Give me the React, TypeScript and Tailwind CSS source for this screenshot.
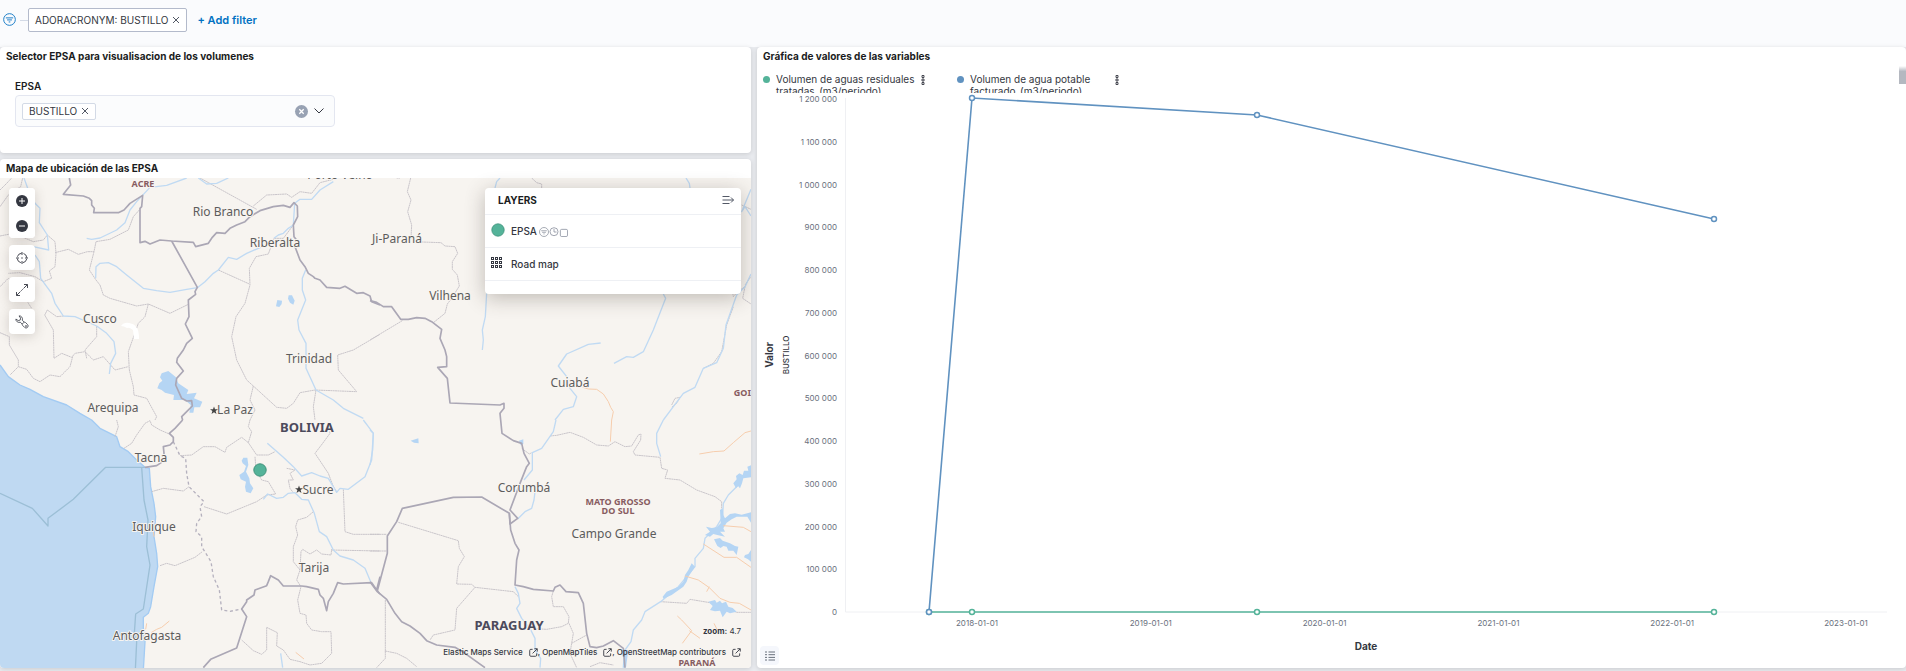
const HALO = "[paint-order:stroke] stroke-[#f8f4f0] [stroke-width:2px]";

// every quadrant of the base map is drawn in its own 3x coordinate space
const quadrants = [
  {
    x: 0,
    y: 170,
    lakes: [
      "485,610 505,603 528,622 535,640 565,660 560,672 590,668 582,685 607,695 600,712 583,712 580,728 568,728 572,705 555,690 535,690 520,690 522,675 495,668 485,660 472,655 478,640 487,632 480,622",
      "832,390 846,392 845,402 838,411 828,409",
      "866,376 876,376 884,392 880,404 870,398 864,386",
    ],
    rivers: [
      "72,24 85,60 105,100 120,115 118,158 142,195 146,240 100,230",
      "105,255 118,275 122,325 155,370 165,400 190,438 225,440 290,468 320,490 342,515 347,550 332,580 328,612",
      "260,205 275,208 300,204 350,180 375,158 390,120 410,95 450,52 500,46 560,24",
      "595,24 620,42 650,40 685,24",
      "287,325 288,290 300,280 325,278 350,290 380,315 430,355 470,362 510,367 560,358 592,353 615,335 640,310 655,300 685,262 710,268 740,250 775,235 800,225",
      "822,205 835,195 850,190 865,175 880,165 884,100 900,88 935,88 960,60 1000,35",
      "917,300 907,325 907,360 917,390 893,450 897,480 918,520 918,595 948,660 1000,690 1030,715 1090,745",
    ],
    regions: [
      "0,60 20,40 35,24",
      "0,110 25,75 62,50 68,24",
      "0,198 40,190 100,215 130,210 142,195 165,215 168,250 165,290 148,303 155,325 130,335 105,320 60,308 25,310",
      "165,248 205,238 235,253 262,245 282,245 288,215 330,208 385,180 400,140 418,120",
      "282,245 268,300 288,330 300,345 310,375 330,385 410,408 445,402 510,430 565,403",
      "600,24 770,118",
      "760,108 800,75 860,72 875,82 900,65 935,70 960,38 1000,28",
      "880,165 850,205 822,205 805,252 768,260 748,295 750,345 735,400 708,440 695,500 710,570 740,630 760,648 830,712 860,715 880,700 900,668 945,660 1070,665 1015,600 1013,555 1060,540 1140,493",
      "655,300 748,342",
      "445,402 435,440 415,460 385,545 388,600 400,650 402,675 440,685 470,740 465,750",
      "0,350 25,325 60,350 85,400 95,415",
      "142,420 134,435 160,480 162,565 185,550 215,562 225,550 255,545 280,570 310,560 345,600 385,590",
      "142,420 170,440 190,438",
      "290,468 290,500 255,540 260,565",
      "0,488 28,500 28,525 55,570 55,590 30,615",
      "55,590 80,598 100,625 120,635 150,615 180,620 210,590 218,560",
      "760,648 750,690 765,720 750,750",
      "948,660 940,710 945,750",
    ],
    countries: [
      "208,24 212,45 190,73 250,78 268,85 275,92 275,105 283,115 281,128 355,128 372,120 390,100 428,76 425,110 420,115 420,218 435,214 450,222 480,210 515,213 580,217 587,230 625,220 637,202 650,188 675,190 690,175 710,165 735,155 750,140 780,122 820,110 850,106 870,112 882,98 892,108 893,140 880,165 882,200 890,210 885,230 900,270 915,290 925,310 940,320 945,325 960,330 980,352 1020,355 1035,349 1070,370 1090,368 1110,378 1115,395 1140,405",
      "515,213 592,352 585,365 587,373 565,390 567,440 556,462 577,505 560,520 550,540 532,565 530,577 550,603 530,625 527,645 545,685 560,693 575,692 577,708 560,725 545,740 548,750",
    ],
    roads: [],
  },
  {
    x: 370,
    y: 170,
    lakes: [],
    rivers: [
      "375,54 380,35 390,24",
      "948,24 958,40 960,54",
      "350,370 346,440 337,480 340,510 337,540",
      "692,519 655,523 590,552 565,588 590,620 600,655 620,680 610,710 580,718 555,750",
      "880,372 887,385 850,480 820,545 790,562 770,560 732,580",
      "1143,58 1115,125 1125,110 1143,138",
      "1143,312 1125,350 1100,375 1068,465 1060,535 1040,578 1000,595 975,652 940,670 910,710 880,750",
    ],
    regions: [
      "122,24 112,65 123,90 113,125 125,165 123,205",
      "80,24 90,24",
      "485,24 500,38 515,42 515,54",
      "155,216 213,218 225,228 255,230 263,250 247,275 247,298 262,315 268,348 245,385 232,402 225,430 190,458",
      "97,452 0,510",
      "1085,350 1090,380 1103,365 1125,350 1118,385 1143,402",
      "1115,105 1143,118",
      "1000,595 1030,580 1055,545 1070,465 1090,410",
      "905,705 915,685 930,682 920,700 905,712",
      "1125,345 1143,320",
    ],
    countries: [
      "0,392 20,397 40,410 65,410 92,448 115,448 140,443 165,445 185,455 215,478 210,505 225,540 230,560 230,590 203,592 232,625 240,699 390,705 402,700 402,715 390,730 392,750",
    ],
    roads: ["638,652 655,657 680,658 700,672 715,695 722,712 730,725 725,750"],
  },
  {
    x: 0,
    y: 420,
    lakes: [
      "725,122 730,113 742,113 745,135 738,155 748,175 750,190 760,205 752,220 738,215 735,200 738,185 722,178 718,165 732,155 738,138 728,130",
    ],
    rivers: [
      "802,70 850,112 880,140 905,168 935,158 960,168 985,175 1010,217 1020,205 1045,208 1095,170 1115,120 1120,40 1105,20 1090,0",
      "790,238 803,222 830,235 850,232 865,220 885,218 905,238 925,240 943,280 958,335 980,350 1000,390 1020,408 1060,420 1095,445 1112,485",
      "842,700 848,743",
    ],
    regions: [
      "345,50 355,20 350,0",
      "372,85 395,70 410,45 435,10 450,2 455,15 480,30 508,42",
      "540,107 575,105 610,80 645,80 675,97 680,82 725,52 745,68 770,105 805,105 825,95",
      "745,68 755,35 745,20 750,0",
      "455,215 490,205 550,213 567,200",
      "612,260 680,282 770,245 800,225 827,222 805,185 785,180 768,150 765,110",
      "480,437 500,430 525,437 585,412 607,395",
      "985,15 990,40 968,70 945,100 985,160 1000,200 1010,215",
      "860,145 885,150 870,160 880,180 865,180 870,205 880,218",
      "1030,208 1035,335 1060,343 1070,343 1140,343",
      "993,390 1140,393",
      "940,275 920,292 893,300 887,320 893,345 880,380 880,425 900,450 890,480 903,500 893,540 900,580 918,585 920,610 935,630 965,635 993,635 995,700 965,730 930,735 900,725 870,718 850,690 830,678 832,638 800,622 800,690 785,703 760,692 725,660",
      "900,450 903,395 908,388 930,402 950,390 965,402 993,405 995,388",
    ],
    countries: [
      "548,0 525,25 508,40 520,52 520,65 510,75 490,80 492,100 488,125 470,137 435,142",
      "610,743 632,718 710,684 740,590 725,567 740,545 740,540 762,525 765,510 800,497 805,485 812,467 835,480 850,498 905,498 920,500 955,508 960,525 970,535 980,572 985,545 1000,520 1013,488 1030,492 1115,488 1130,510 1140,470",
      "1130,510 1140,522",
    ],
    roads: ["460,335 462,350", "437,628 440,610", "453,638 470,628 485,622 508,603", "887,697 912,717"],
  },
  {
    x: 370,
    y: 420,
    lakes: [
      "122,62 145,55 146,70 132,68",
      "447,62 460,58 460,72 452,76",
      "1090,190 1100,178 1098,168 1108,160 1118,165 1122,152 1135,152 1132,140 1143,136 1143,172 1120,175 1116,190 1110,205 1104,198 1098,205",
      "1050,270 1058,265 1060,285 1065,295 1080,282 1095,280 1115,284 1143,277 1143,308 1132,290 1100,290 1085,298 1070,308 1060,325 1065,335 1050,335 1065,350 1045,346 1030,342 1020,350 1005,345 1020,335 1008,320 1025,324 1040,322 1052,310",
      "1032,358 1050,354 1058,362 1080,370 1095,378 1105,380 1100,405 1090,392 1075,392 1070,380 1060,378 1052,384 1042,378",
      "1125,405 1135,402 1143,390 1143,425 1134,418 1122,412",
      "878,530 890,515 925,500 940,485 945,465 955,450 965,430 975,440 965,455 955,470 950,485 940,500 905,525 880,536",
      "1015,545 1035,540 1040,548 1050,542 1056,550 1068,545 1075,560 1088,564 1100,575 1080,580 1070,575 1058,592 1050,572 1035,574 1020,570 1028,558",
      "752,690 775,690 768,743 758,743 760,715",
    ],
    rivers: [
      "558,0 550,35 515,85 487,98 487,150 462,180",
      "495,215 492,240 485,265 465,275 443,297",
      "880,0 860,40 860,70 872,110",
      "1105,195 1075,225 1060,250 1058,290 1040,320 1005,355 1000,385 975,415 975,440 925,500 872,545 825,575 815,600 790,630 783,665 765,690 765,743",
      "0,30 10,40 8,90 0,135",
      "435,500 445,520 450,550 440,565 455,595 480,625 495,655 495,690 512,715 510,743",
    ],
    regions: [
      "455,85 478,102 485,98",
      "540,48 560,46 600,37 640,52 680,75 715,78 735,65 765,80 785,78 805,45 813,42 812,60 790,95 795,105 870,112 875,145 893,150 885,175 930,180 980,210 1035,230 1055,245 1055,265",
      "85,307 265,362 268,385 283,410 265,440 260,492 305,493 315,502 430,515 445,530",
      "315,502 260,565 255,630 190,645 180,660",
      "0,343 50,343",
      "0,393 50,393",
      "46,540 46,695",
      "46,693 80,700 110,715 140,740",
      "46,693 46,715 20,743",
      "550,513 545,530 550,560 580,560 597,590 595,610 575,620 530,628 480,625",
      "597,610 610,640 605,670 650,645",
      "605,670 600,700 620,743",
      "660,740 690,728 730,735",
      "872,545 950,550 960,538 1020,548 1100,577 1143,577",
    ],
    countries: [
      "392,0 396,40 430,62 455,70 462,100 478,130 470,140 450,190 420,270 443,295 420,312 418,280 335,231 250,232 97,265 80,305 52,348 52,400 22,512",
      "418,280 422,330 435,370 447,390 440,420 435,495 460,500 490,508 550,513 555,502 570,495 588,515 625,518 640,550 650,640 660,680 680,683 700,678 730,662 760,685 765,743",
      "0,485 22,515 50,538 75,580 95,605 120,618 150,640 170,662 200,675 255,682 285,700 345,743",
    ],
    roads: [
      "725,0 721,65",
      "1143,33 1125,38 1090,68 1062,93 1030,95 988,102",
      "1060,317 1120,322 1143,335",
      "1000,372 1062,412 1100,412 1143,442",
      "945,468 985,480 1018,503 1050,535 1080,547 1108,550 1143,570",
      "922,588 935,600 965,632 937,670",
      "958,632 990,655",
      "1032,610 1042,630",
      "1018,500 1010,515",
    ],
  },
];

const cities = [
  { name: "Rio Branco", x: 223, y: 216 },
  { name: "Riberalta", x: 275, y: 247 },
  { name: "Ji-Paraná", x: 397, y: 243 },
  { name: "Vilhena", x: 450, y: 300 },
  { name: "Porto Velho", x: 340, y: 179 },
  { name: "Cusco", x: 100, y: 323 },
  { name: "Trinidad", x: 309, y: 363 },
  { name: "Cuiabá", x: 570, y: 387 },
  { name: "Arequipa", x: 113, y: 412 },
  { name: "La Paz", x: 235, y: 414 },
  { name: "Tacna", x: 151, y: 462 },
  { name: "Sucre", x: 318, y: 494 },
  { name: "Corumbá", x: 524, y: 492 },
  { name: "Iquique", x: 154, y: 531 },
  { name: "Campo Grande", x: 614, y: 538 },
  { name: "Tarija", x: 314, y: 572 },
  { name: "Antofagasta", x: 147, y: 640 },
];

const states = [
  { name: "ACRE", x: 143, y: 187 },
  { name: "GOIÁS", x: 748, y: 396 },
  { name: "MATO GROSSO", x: 618, y: 505 },
  { name: "DO SUL", x: 618, y: 514 },
  { name: "PARANÁ", x: 697, y: 666 },
];

function Filter({ className }: { className?: string }) {
  return (
    <svg viewBox="0 0 16 16" className={className} fill="none" stroke="currentColor" strokeWidth="1.2">
      <circle cx="8" cy="8" r="7.2" />
      <path d="M3.5 6h9M5 8.500h6M7 11h2" />
    </svg>
  );
}

function Cross() {
  return (
    <svg viewBox="0 0 8 8" className="size-2" fill="none" stroke="#535966" strokeWidth="1">
      <path d="M1 1l6 6M7 1L1 7" />
    </svg>
  );
}

function External() {
  return (
    <svg viewBox="0 0 10 10" className="inline size-[9px] ml-[6px]" fill="none" stroke="currentColor" strokeWidth="1">
      <path d="M4 1.500H2A1.200 1.200 0 0 0 .8 2.700V8A1.200 1.200 0 0 0 2 9.200h5.300A1.200 1.200 0 0 0 8.500 8V6M6 .8h3.200V4M9 1L4 6" />
    </svg>
  );
}

function BaseMap() {
  return (
    <svg viewBox="0 178 751 490" className="block w-full h-auto bg-[#f7f4f0]" fill="none" strokeLinejoin="round">
      <g transform="translate(0 420) scale(0.33333)">
        <polygon
          points="0,-165 25,-130 60,-105 90,-92 130,-70 200,-45 240,-20 275,0 300,25 350,50 360,80 385,95 410,120 435,142 448,145 452,200 462,250 467,290 462,350 470,400 473,440 462,500 452,560 445,580 430,592 430,625 437,645 435,665 430,750 0,750"
          fill="#bfd9f2"
        />
        <polyline
          points="0,-165 25,-130 60,-105 90,-92 130,-70 200,-45 240,-20 275,0 300,25 350,50 360,80 385,95 410,120 435,142 448,145 452,200 462,250 467,290 462,350 470,400 473,440 462,500 452,560 445,580 430,592 430,625 437,645 435,665 430,750"
          stroke="#a3cbf3"
          strokeWidth="4"
        />
        <g stroke="#9cbfd6" strokeWidth="4">
          <polyline points="0,220 97,265 144,318 144,295 220,238 317,142 435,142" />
          <polyline points="425,142 432,240 444,300 440,380 450,435 430,567 407,582 403,640 410,665 406,750" />
        </g>
        <polyline
          points="520,65 540,107 557,115 560,160 567,200 612,245 600,260 605,290 590,310 588,335 605,350 605,380 633,425 640,470 658,510 665,570 690,574 725,567"
          stroke="#b5b1be"
          strokeWidth="4"
          strokeDasharray="9 8"
        />
      </g>
      {quadrants.map((q) => (
        <g key={`${q.x}-${q.y}`} transform={`translate(${q.x} ${q.y}) scale(0.33333)`}>
          {q.regions.map((p) => (
            <polyline key={p} points={p} stroke="#c9c5ca" strokeWidth="3" strokeDasharray="6 1" />
          ))}
          {q.rivers.map((p) => (
            <polyline key={p} points={p} stroke="#c0daf3" strokeWidth="4" />
          ))}
          {q.lakes.map((p) => (
            <polygon key={p} points={p} fill="#b5d5f4" />
          ))}
          {q.roads.map((p) => (
            <polyline key={p} points={p} stroke="#f6cdad" strokeWidth="3" />
          ))}
          {q.countries.map((p) => (
            <polyline key={p} points={p} stroke="#aba7b5" strokeWidth="5" />
          ))}
        </g>
      ))}
      <path d="M121 326q3-4 8-3 6 1 7 4 3 2 3 12h-5l-1-9q-4-3-6-2-3-2-6-2z" fill="#fff" />

      <g textAnchor="middle" className="font-['Noto_Sans',sans-serif]">
        {cities.map((c) => (
          <text key={c.name} x={c.x} y={c.y} className={`text-[12px] fill-[#5c5c5c] ${HALO}`}>
            {c.name}
          </text>
        ))}
        {states.map((s) => (
          <text key={s.name} x={s.x} y={s.y} className={`text-[9px] font-bold fill-[#875c61] ${HALO}`}>
            {s.name}
          </text>
        ))}
        <text x="307" y="432" className={`text-[13px] font-bold fill-[#4c4a5c] ${HALO}`}>BOLIVIA</text>
        <text x="509" y="630" className={`text-[13px] font-bold fill-[#4c4a5c] ${HALO}`}>PARAGUAY</text>
      </g>
      <g fill="#444">
        <path d="M214 406.500l1 2.800h3l-2.400 1.800.9 2.900-2.500-1.700-2.500 1.700.9-2.900-2.400-1.800h3z" />
        <path d="M299 485.500l1 2.800h3l-2.400 1.800.9 2.900-2.500-1.700-2.500 1.700.9-2.900-2.400-1.800h3z" />
      </g>
      <circle cx="260" cy="470" r="6.200" fill="#54b399" stroke="#41937c" />
    </svg>
  );
}

function MapControls() {
  const button = "flex items-center justify-center w-[26px] h-[25px] rounded bg-white text-[#343741]";
  return (
    <div className="absolute left-[9px] top-[10px] flex flex-col gap-[7px] [&>*]:shadow-[0_2px_12px_rgba(80,70,60,0.22)]">
      <div className="flex flex-col rounded bg-white">
        <button aria-label="Zoom in" className={button}>
          <svg viewBox="0 0 12 12" className="size-3">
            <circle cx="6" cy="6" r="6" fill="#343741" />
            <path d="M3 6h6M6 3v6" stroke="#fff" />
          </svg>
        </button>
        <button aria-label="Zoom out" className={button}>
          <svg viewBox="0 0 12 12" className="size-3">
            <circle cx="6" cy="6" r="6" fill="#343741" />
            <path d="M3 6h6" stroke="#fff" />
          </svg>
        </button>
      </div>
      <button aria-label="Fit to data bounds" className={button}>
        <svg viewBox="0 0 12 12" className="size-3" fill="none" stroke="currentColor" strokeWidth="0.900">
          <circle cx="6" cy="6" r="4.800" strokeDasharray="5.500 2.040" strokeDashoffset="-1" />
          <path d="M6 0v3M6 9v3M0 6h3M9 6h3" />
          <circle cx="6" cy="6" r="0.700" fill="currentColor" stroke="none" />
        </svg>
      </button>
      <button aria-label="Expand" className={button}>
        <svg viewBox="0 0 12 12" className="size-3" fill="none" stroke="currentColor" strokeWidth="0.900">
          <path d="M8 .5h3.500V4M4 11.500H.5V8M11.300.7L7.500 4.500M.7 11.300l3.800-3.800M5.300 6.700l1.400-1.400" />
        </svg>
      </button>
      <button aria-label="Tools" className={button}>
        <svg viewBox="0 0 14 14" className="size-[14px]" fill="none" stroke="currentColor" strokeWidth="0.800">
          <path d="M4 .9a3.200 3.200 0 0 1 3.300 4.300l1.900 1.900a2 2 0 0 1 1.300.4l2 2a2 2 0 0 1-2.900 2.900l-2-2a2 2 0 0 1-.4-1.300L5.300 7.200A3.200 3.200 0 0 1 .9 4l2.300 1.600 2-.5.4-2z" />
          <path d="M7.200 9.100l2-2" />
          <circle cx="11" cy="11" r="0.500" />
        </svg>
      </button>
    </div>
  );
}

function LayersPanel() {
  return (
    <div className="absolute right-[10px] top-[10px] w-64 pb-[13px] rounded bg-white text-[10px] text-[#343741] shadow-[0_4px_20px_rgba(60,50,40,0.3)]">
      <div className="flex items-center justify-between h-[27px] pl-[13px] pr-[7px] pb-[2px] border-b border-[#eef0f4]">
        <h3 className="font-bold text-[#1a1c21]">LAYERS</h3>
        <button aria-label="Collapse layers">
          <svg viewBox="0 0 12 10" className="w-3 h-[10px]" fill="none" stroke="#535966" strokeWidth="1">
            <path d="M.5 1.500h7M.5 5h11M.5 8.500h7M9 2.500L11.500 5 9 7.500" />
          </svg>
        </button>
      </div>
      <div className="flex items-center h-[33px] pl-[6px] border-b border-[#eef0f4]">
        <svg viewBox="0 0 14 14" className="size-[14px] mr-[6px] mb-[2px]">
          <circle cx="7" cy="7" r="6.200" fill="#54b399" stroke="#41937c" strokeWidth="0.800" />
        </svg>
        <span className="font-medium">EPSA</span>
        <div className="flex items-center ml-[2px] mt-[2px] text-[#8b919e]">
          <Filter className="size-[10px]" />
          <svg viewBox="0 0 10 10" className="size-[10px]" fill="none" stroke="currentColor" strokeWidth="0.800">
            <circle cx="5" cy="4.700" r="4" />
            <path d="M5 2v3h2.500" />
          </svg>
          <svg viewBox="0 0 10 10" className="size-[9px]" fill="none" stroke="currentColor" strokeWidth="0.900">
            <rect x="1.500" y="1.500" width="8" height="8" rx="1.500" />
          </svg>
        </div>
      </div>
      <div className="flex items-center h-[33px] pl-[6px] border-b border-[#eef0f4]">
        <svg viewBox="0 0 12 12" className="size-3 mr-2 mb-[2px]" fill="none" stroke="#343741" strokeWidth="1">
          {[0, 1, 2].map((r) =>
            [0, 1, 2].map((c) => <rect key={`${r}${c}`} x={0.5 + c * 4} y={0.5 + r * 4} width="2" height="2" />)
          )}
        </svg>
        <span className="font-medium">Road map</span>
      </div>
    </div>
  );
}

const legend = [
  { label: "Volumen de aguas residuales tratadas_(m3/periodo)", color: "bg-[#54b399]" },
  { label: "Volumen de agua potable facturado_(m3/periodo)", color: "bg-[#6092c0]" },
];

const yTicks = ["0", "100 000", "200 000", "300 000", "400 000", "500 000", "600 000", "700 000", "800 000", "900 000", "1 000 000", "1 100 000", "1 200 000"];
const xTicks = ["2018-01-01", "2019-01-01", "2020-01-01", "2021-01-01", "2022-01-01", "2023-01-01"];
const residual = [[929, 612], [972, 612], [1257, 612], [1714, 612]];
const potable = [[929, 612], [972, 98], [1257, 115], [1714, 219]];

function Series({ points, color }: { points: number[][]; color: string }) {
  return (
    <g stroke={color}>
      <polyline points={points.join(" ")} fill="none" strokeWidth="1.600" />
      {points.map(([x, y]) => (
        <circle key={x} cx={x} cy={y} r="2.500" fill="#fff" strokeWidth="1.500" />
      ))}
    </g>
  );
}

function Chart() {
  return (
    <svg viewBox="757 93 1149 575" className="block w-full h-auto">
      <path d="M845.500 98v514H1887" fill="none" stroke="#eff0f3" />
      <g className="text-[8px] fill-[#69707d]" textAnchor="end">
        {yTicks.map((t, i) => (
          <text key={t} x="837" y={615 - i * 42.75}>{t}</text>
        ))}
      </g>
      <g className="text-[8px] fill-[#69707d]" textAnchor="middle">
        {xTicks.map((t, i) => (
          <text key={t} x={977 + i * 173.8} y="626">{t}</text>
        ))}
      </g>
      <text transform="translate(773 355) rotate(-90)" textAnchor="middle" className="text-[10px] font-bold fill-[#343741]">Valor</text>
      <text transform="translate(789 355) rotate(-90)" textAnchor="middle" className="text-[8px] font-medium fill-[#343741]">BUSTILLO</text>
      <text x="1366" y="650" textAnchor="middle" className="text-[10px] font-bold fill-[#343741]">Date</text>
      <Series points={residual} color="#54b399" />
      <Series points={potable} color="#6092c0" />
    </svg>
  );
}

export default function App() {
  const panel = "relative rounded bg-white overflow-hidden shadow-[0_1px_5px_rgba(0,0,0,0.14)]";
  const title = "px-[6px] h-[19px] leading-[19px] text-[10px] font-bold text-[#1a1c21]";
  return (
    <div className="min-h-screen bg-[#fafbfd] font-[Inter,sans-serif] text-[#343741]">
      <header className="flex items-center h-[47px] pb-[7px] pl-[3px]">
        <button aria-label="Filter options" className="pb-[2px] text-[#1a7cc7]">
          <Filter className="size-[13px]" />
        </button>
        <div className="w-2 ml-1 border-t border-[#d3dae6]" />
        <div className="flex items-center gap-1 h-6 px-[6px] border border-[#b3bacb] rounded-xs bg-white text-[10px]">
          <span>ADORACRONYM: BUSTILLO</span>
          <button aria-label="Remove filter"><Cross /></button>
        </div>
        <button className="ml-[10px] text-[11px] font-semibold text-[#0071c2]">+ Add filter</button>
      </header>

      <main className="grid grid-cols-[751fr_1149fr] items-start gap-[6px] pb-[3px] bg-[#e9ebef]">
        <div className="flex flex-col gap-[6px]">
          <section className={`${panel} pb-[26px]`}>
            <h2 className={title}>Selector EPSA para visualisacion de los volumenes</h2>
            <div className="mt-[11px] ml-[15px] w-80">
              <label htmlFor="epsa" className="block h-[18px] leading-[18px] text-[10px] font-semibold text-[#1a1c21]">EPSA</label>
              <div className="flex items-center h-8 px-[6px] border border-[#e3e6f0] rounded bg-[#fbfcfd]">
                <span className="flex items-center gap-1 h-[17px] px-[6px] border border-[#d3dae6] rounded-xs bg-white text-[10px]">
                  BUSTILLO
                  <button aria-label="Remove BUSTILLO"><Cross /></button>
                </span>
                <input id="epsa" className="flex-1 min-w-0 bg-transparent outline-none" />
                <button aria-label="Clear" className="flex items-center justify-center size-[13px] rounded-full bg-[#98a2b3]">
                  <svg viewBox="0 0 8 8" className="size-[7px]" stroke="#fff" strokeWidth="1.500">
                    <path d="M1.500 1.500l5 5M6.500 1.500l-5 5" />
                  </svg>
                </button>
                <button aria-label="Open list" className="ml-[6px] mr-1">
                  <svg viewBox="0 0 10 6" className="w-[10px] h-[6px]" fill="none" stroke="#343741">
                    <path d="M.5.5L5 5 9.500.5" />
                  </svg>
                </button>
              </div>
            </div>
          </section>

          <section className={panel}>
            <h2 className={title}>Mapa de ubicación de las EPSA</h2>
            <div className="relative">
              <BaseMap />
              <MapControls />
              <LayersPanel />
              <p className="absolute right-[10px] bottom-[31px] text-[8px] leading-3"><b>zoom:</b> 4.7</p>
              <p className="absolute right-[10px] bottom-[10px] text-[8px] leading-3 font-medium">
                <a href="#ems">Elastic Maps Service<External /></a>, <a href="#omt">OpenMapTiles<External /></a>, <a href="#osm">OpenStreetMap contributors<External /></a>
              </p>
            </div>
          </section>
        </div>

        <section className={panel}>
          <h2 className={title}>Gráfica de valores de las variables</h2>
          <ul className="flex h-[27px] pt-[7px] pl-[6px] overflow-hidden">
            {legend.map((l) => (
              <li key={l.label} className="flex w-[194px]">
                <span className={`shrink-0 size-[7px] mt-[3px] rounded-full ${l.color}`} />
                <span className="w-[141px] ml-[6px] text-[10px] leading-3">{l.label}</span>
                <button aria-label="Series actions" className="self-start mt-[2px] ml-1">
                  <svg viewBox="0 0 4 10" className="w-1 h-[10px]" fill="none" stroke="#343741" strokeWidth="0.900">
                    <path d="M1 .5h2v2H1zM1 4h2v2H1zM1 7.500h2v2H1z" />
                  </svg>
                </button>
              </li>
            ))}
          </ul>
          <Chart />
          <div className="absolute right-0 top-[19px] w-[7px] h-[18px] bg-linear-to-b from-white to-[#b4b8c0] to-30%" />
          <button aria-label="Toggle legend" className="absolute left-[3px] bottom-[3px] flex items-center justify-center size-[19px] rounded bg-[#f5f7fc]">
            <svg viewBox="0 0 10 10" className="size-[10px]" stroke="#69707d" strokeWidth="1">
              <path d="M0 1h2M3.500 1H10M0 3.700h2M3.500 3.700H10M0 6.400h2M3.500 6.400H10M0 9h2M3.500 9H10" />
            </svg>
          </button>
        </section>
      </main>
    </div>
  );
}
